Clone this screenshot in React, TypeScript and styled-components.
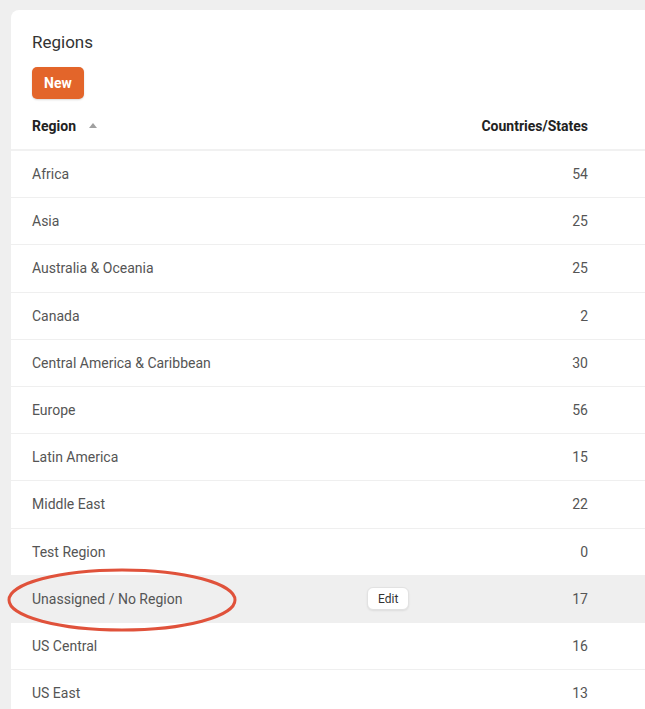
import React from "react";
import styled, { createGlobalStyle } from "styled-components";

const Global = createGlobalStyle`
  html, body { margin: 0; padding: 0; background: #efefef; overflow: hidden; }
  body { font-family: Roboto, "Liberation Sans", Arial, sans-serif; }
`;

const Page = styled.div`
  padding: 10px 0 0 11px;
  width: 700px;
  height: 699px;
  overflow: hidden;
`;

const Card = styled.div`
  position: relative;
  background: #fff;
  border-radius: 8px 0 0 0;
  width: 660px;
  padding-top: 22px;
  min-height: 700px;
`;

const Title = styled.h1`
  margin: 0 0 0 21px;
  font-size: 17px;
  line-height: 20px;
  font-weight: 400;
  color: #333;
`;

const NewButton = styled.button`
  margin: 15px 0 0 21px;
  height: 32px;
  padding: 0 12px;
  border: none;
  border-radius: 5px;
  background: #e3652a;
  color: #fff;
  font-family: inherit;
  font-weight: 700;
  font-size: 14px;
  box-shadow: 0 1px 2px rgba(0,0,0,0.15);
`;

const Table = styled.div`
  margin-top: 3px;
`;

const Row = styled.div<{ $head?: boolean; $hl?: boolean }>`
  display: grid;
  grid-template-columns: 335px 1fr 120px;
  align-items: center;
  height: ${(p) => (p.$head ? "47px" : "46.2px")};
  padding: 0 83px 0 21px;
  border-bottom: ${(p) => (p.$head ? "2px solid #f1f1f1" : "1px solid #efefef")};
  background: ${(p) => (p.$hl ? "#efefef" : "transparent")};
  font-size: 14px;
  color: ${(p) => (p.$head ? "#222" : "#555")};
  font-weight: ${(p) => (p.$head ? 700 : 400)};
`;

const HeadLabel = styled.span`
  display: flex;
  align-items: center;
  gap: 13px;
`;

const SortArrow = styled.span`
  width: 0;
  height: 0;
  border-left: 4px solid transparent;
  border-right: 4px solid transparent;
  border-bottom: 5px solid #a0a0a0;
`;

const Count = styled.span`
  text-align: right;
`;

const Actions = styled.span`
  display: flex;
`;

const EditButton = styled.button`
  height: 23px;
  padding: 0 10px;
  background: #fff;
  border: 1px solid #e2e2e2;
  border-radius: 6px;
  font-family: inherit;
  font-size: 12px;
  color: #333;
  box-shadow: 0 1px 2px rgba(0,0,0,0.08);
`;

const Annotation = styled.svg`
  position: absolute;
  left: -4px;
  top: 557px;
  pointer-events: none;
`;

const rows: [string, number][] = [
  ["Africa", 54],
  ["Asia", 25],
  ["Australia & Oceania", 25],
  ["Canada", 2],
  ["Central America & Caribbean", 30],
  ["Europe", 56],
  ["Latin America", 15],
  ["Middle East", 22],
  ["Test Region", 0],
  ["Unassigned / No Region", 17],
  ["US Central", 16],
  ["US East", 13],
];

export default function App() {
  return (
    <>
      <Global />
      <Page>
        <Card>
          <Title>Regions</Title>
          <NewButton>New</NewButton>
          <Table>
            <Row $head>
              <HeadLabel>
                Region <SortArrow />
              </HeadLabel>
              <span />
              <Count>Countries/States</Count>
            </Row>
            {rows.map(([name, n]) => {
              const hl = name.startsWith("Unassigned");
              return (
                <Row key={name} $hl={hl}>
                  <span>{name}</span>
                  <Actions>{hl && <EditButton>Edit</EditButton>}</Actions>
                  <Count>{n}</Count>
                </Row>
              );
            })}
          </Table>
          <Annotation width="240" height="70" viewBox="0 0 240 70">
            <ellipse cx="115" cy="33" rx="113" ry="30" fill="none" stroke="#e0523b" strokeWidth="3" />
          </Annotation>
        </Card>
      </Page>
    </>
  );
}
